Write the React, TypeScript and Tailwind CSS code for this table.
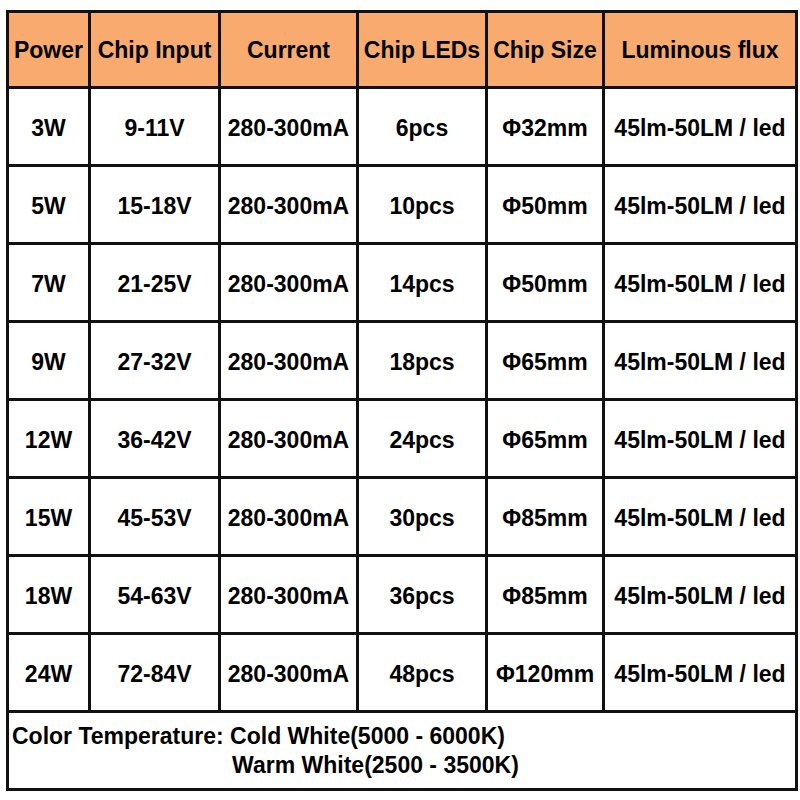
import * as React from "react";

const headers = ["Power", "Chip Input", "Current", "Chip LEDs", "Chip Size", "Luminous flux"];

const rows: string[][] = [
  ["3W", "9-11V", "280-300mA", "6pcs", "Φ32mm", "45lm-50LM / led"],
  ["5W", "15-18V", "280-300mA", "10pcs", "Φ50mm", "45lm-50LM / led"],
  ["7W", "21-25V", "280-300mA", "14pcs", "Φ50mm", "45lm-50LM / led"],
  ["9W", "27-32V", "280-300mA", "18pcs", "Φ65mm", "45lm-50LM / led"],
  ["12W", "36-42V", "280-300mA", "24pcs", "Φ65mm", "45lm-50LM / led"],
  ["15W", "45-53V", "280-300mA", "30pcs", "Φ85mm", "45lm-50LM / led"],
  ["18W", "54-63V", "280-300mA", "36pcs", "Φ85mm", "45lm-50LM / led"],
  ["24W", "72-84V", "280-300mA", "48pcs", "Φ120mm", "45lm-50LM / led"],
];

export default function App() {
  return (
    <div className="w-[800px] h-[800px] bg-white pt-[10px] pl-[6px] font-['Liberation_Sans',Arial,sans-serif] font-bold text-[23px] text-black">
      <div className="w-[792px] bg-[#111] p-[3px] grid gap-[3px] grid-cols-[79px_127px_135px_126px_114px_190px]">
        {headers.map((h) => (
          <div
            key={h}
            className="h-[73px] bg-[#f9aa6e] flex items-center justify-center whitespace-nowrap leading-none pt-[2px]"
          >
            {h}
          </div>
        ))}
        {rows.map((r, i) => (
          <React.Fragment key={i}>
            {r.map((c, j) => (
              <div
                key={j}
                className="h-[75px] bg-white flex items-center justify-center whitespace-nowrap leading-none pt-[3px]"
              >
                {c}
              </div>
            ))}
          </React.Fragment>
        ))}
        {/* footer note */}
        <div className="col-span-6 h-[75px] bg-white flex items-center pl-[3px] pt-[1px] leading-[29px] whitespace-nowrap">
          <div className="flex items-start">
            <span>Color Temperature:&nbsp;</span>
            <div className="flex flex-col">
              <span>Cold White(5000 - 6000K)</span>
              <span className="pl-[2px]">Warm White(2500 - 3500K)</span>
            </div>
          </div>
        </div>
      </div>
    </div>
  );
}
